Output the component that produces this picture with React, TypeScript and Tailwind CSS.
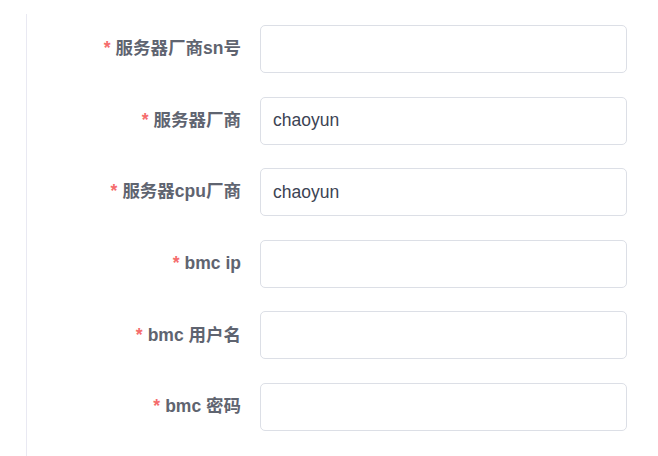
const FIELDS = [
  { label: "服务器厂商sn号", value: "" },
  { label: "服务器厂商", value: "chaoyun" },
  { label: "服务器cpu厂商", value: "chaoyun" },
  { label: "bmc ip", value: "" },
  { label: "bmc 用户名", value: "" },
  { label: "bmc 密码", value: "" },
];

const FONT = "font-['Liberation_Sans','Noto_Sans_CJK_SC',sans-serif]";

export default function App() {
  return (
    <div className={`h-screen bg-white pt-[14px] pl-[26px] ${FONT}`}>
      <div className="h-full border-l border-[#e9e9f2] pt-[11px]">
        <div className="flex flex-col gap-[23.6px]">
          {FIELDS.map(f => (
            <div key={f.label} className="flex items-center">
              <label className="w-[214px] text-right text-[17.5px] font-bold text-[#5f6470] leading-none">
                <span className="text-[#f56c6c] mr-[5px]">*</span>
                {f.label}
              </label>
              <input
                type="text"
                defaultValue={f.value}
                className="ml-[19px] w-[367px] h-[48px] border border-[#dcdfe6] rounded-[5px] px-[12px] text-[17.5px] text-[#3c4353] outline-none"
              />
            </div>
          ))}
        </div>
      </div>
    </div>
  );
}
